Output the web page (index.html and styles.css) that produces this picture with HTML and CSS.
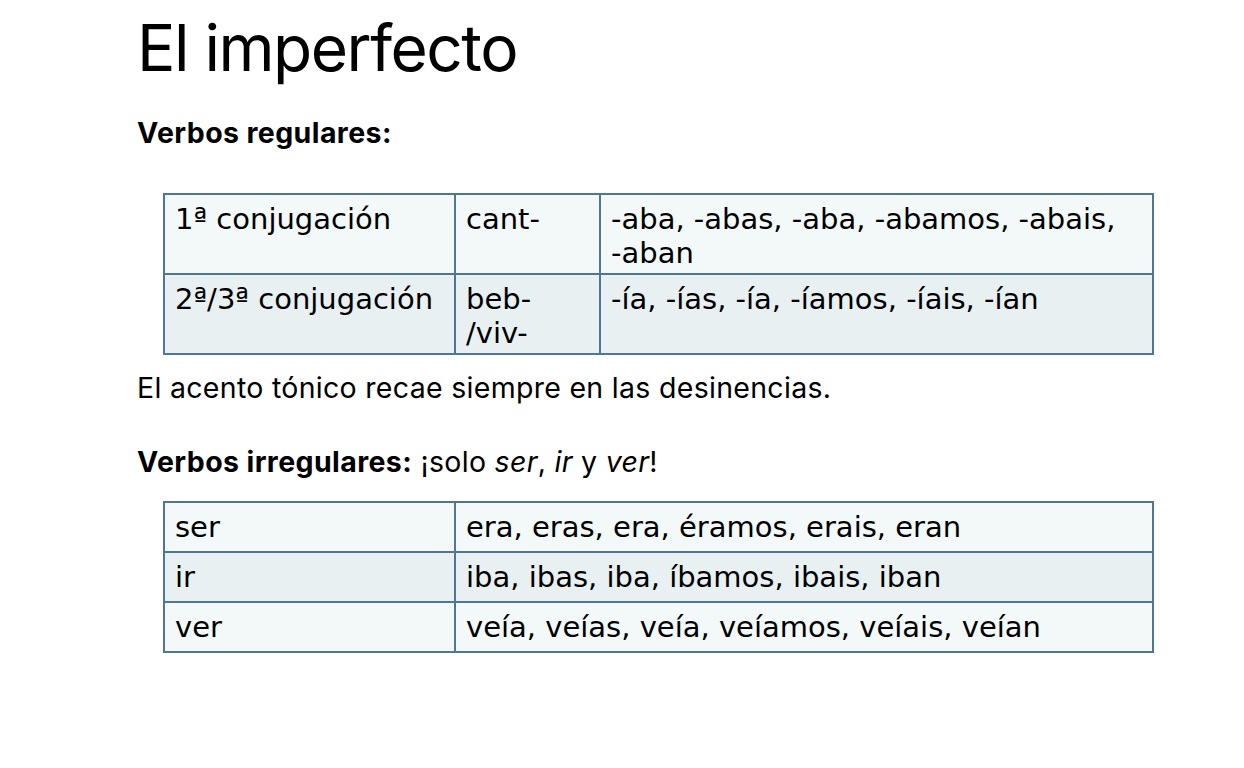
FILE: index.html
```html
<!DOCTYPE html>
<html lang="es">
<head>
<meta charset="utf-8">
<title>El imperfecto</title>
<link rel="stylesheet" href="styles.css">
</head>
<body>
<main class="slide">
  <h1 class="title">El imperfecto</h1>
  <p class="label"><strong>Verbos regulares:</strong></p>
  <table class="conj conj-reg">
    <colgroup><col class="c1"><col class="c2"><col class="c3"></colgroup>
    <tr class="odd"><td>1ª conjugación</td><td>cant-</td><td>-aba, -abas, -aba, -abamos, -abais, <span class="nw">-aban</span></td></tr>
    <tr class="even"><td>2ª/3ª conjugación</td><td>beb-<br>/viv-</td><td>-ía, -ías, -ía, -íamos, -íais, -ían</td></tr>
  </table>
  <p class="note">El acento tónico recae siempre en las desinencias.</p>
  <p class="label label-irr"><strong>Verbos irregulares:</strong> ¡solo <em>ser</em>, <em>ir</em> y <em>ver</em>!</p>
  <table class="conj conj-irr">
    <colgroup><col class="c1"><col class="c23"></colgroup>
    <tr class="odd"><td>ser</td><td>era, eras, era, éramos, erais, eran</td></tr>
    <tr class="even"><td>ir</td><td>iba, ibas, iba, íbamos, ibais, iban</td></tr>
    <tr class="odd"><td>ver</td><td>veía, veías, veía, veíamos, veíais, veían</td></tr>
  </table>
</main>
</body>
</html>
```
FILE: styles.css
```css
html, body {
  margin: 0;
  padding: 0;
  background: #ffffff;
}
body {
  font-family: Inter, "Open Sans", sans-serif;
  color: #000;
}
.slide {
  width: 1244px;
  height: 768px;
  box-sizing: border-box;
  padding: 10px 0 0 137px;
}
.title {
  margin: 0;
  font-weight: 400;
  font-size: 64px;
  line-height: 76px;
  letter-spacing: -1.5px;
}
.label,
.note {
  margin: 0;
  font-size: 28.5px;
  line-height: 36px;
  letter-spacing: 0.3px;
}
.label { margin-top: 29px; }
.label strong { font-weight: 700; letter-spacing: 0.4px; }
.label em { font-style: italic; }
.note { margin-top: 15px; }
.label-irr { margin-top: 38px; }
.conj {
  margin: 0 0 0 26px;
  width: 991px;
  border-collapse: collapse;
  table-layout: fixed;
  font-family: "DejaVu Sans", Verdana, sans-serif;
  font-size: 29px;
  line-height: 34px;
}
.conj-reg { margin-top: 42px; }
.conj-irr { margin-top: 21px; }
.conj td {
  border: 2px solid #4f7696;
  padding: 7px 10px 3px 10px;
  vertical-align: top;
}
.conj-irr td { padding: 7px 10px 7px 10px; }
.conj .c1 { width: 291px; }
.conj .c2 { width: 145px; }
.nw { white-space: nowrap; }
.conj tr.odd td { background: #f3f8f9; }
.conj tr.even td { background: #e8f0f2; }
```
